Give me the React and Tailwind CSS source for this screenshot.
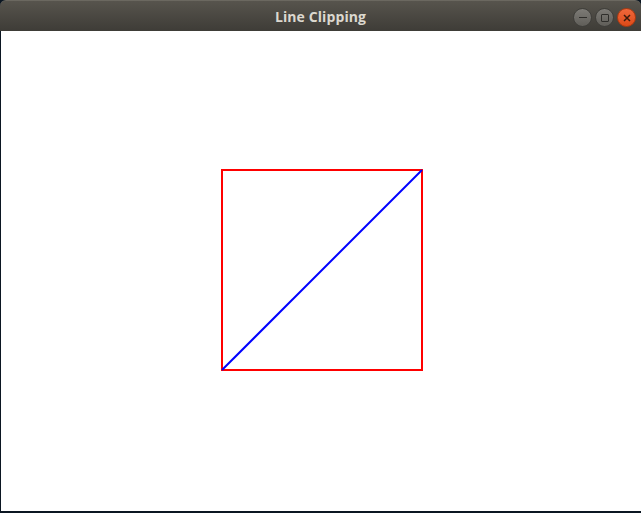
import React from 'react';

const WindowButton = ({ close, children }) => (
    <div
        className={`w-[19px] h-[19px] rounded-full flex items-center justify-center border ${close ? 'bg-gradient-to-b from-[#f0673a] to-[#dd4a16] border-[#b03a10]' : 'bg-gradient-to-b from-[#7d7b76] to-[#605e59] border-[#3f3e3a]'}`}
    >
        {children}
    </div>
);

const App = () => {
    return (
        <div className="w-[641px] h-[513px] flex flex-col bg-[#0b1622]">
            {/* Title bar */}
            <div className="relative h-[31px] shrink-0 rounded-tl-[6px] rounded-tr-[6px] border-t border-[#6b6860] bg-gradient-to-b from-[#57544d] to-[#3e3c37] flex items-center justify-center">
                <span className="text-[14px] font-bold text-[#dcd8cf] tracking-[0.1px]" style={{ fontFamily: '"Open Sans", "DejaVu Sans", sans-serif' }}>
                    Line Clipping
                </span>
                <div className="absolute right-[5px] top-[7px] flex gap-[3px]">
                    <WindowButton>
                        <div className="w-[8px] h-[1.5px] bg-[#2f2e2b]" />
                    </WindowButton>
                    <WindowButton>
                        <div className="w-[8px] h-[8px] border-[1.5px] border-[#2f2e2b] rounded-[1px]" />
                    </WindowButton>
                    <WindowButton close>
                        <svg width="8" height="8" viewBox="0 0 8 8">
                            <path d="M1 1 L7 7 M7 1 L1 7" stroke="#3b1a0c" strokeWidth="1.5" />
                        </svg>
                    </WindowButton>
                </div>
            </div>

            {/* Canvas */}
            <div className="flex-1 ml-[1px] mb-[2px] bg-white">
                <svg width="640" height="480" viewBox="0 0 640 480">
                    <rect x="221" y="139" width="200" height="200" fill="none" stroke="#ff0000" strokeWidth="2" />
                    <line x1="221" y1="339" x2="421" y2="139" stroke="#0000ff" strokeWidth="2" />
                </svg>
            </div>
        </div>
    );
};

export default App;
